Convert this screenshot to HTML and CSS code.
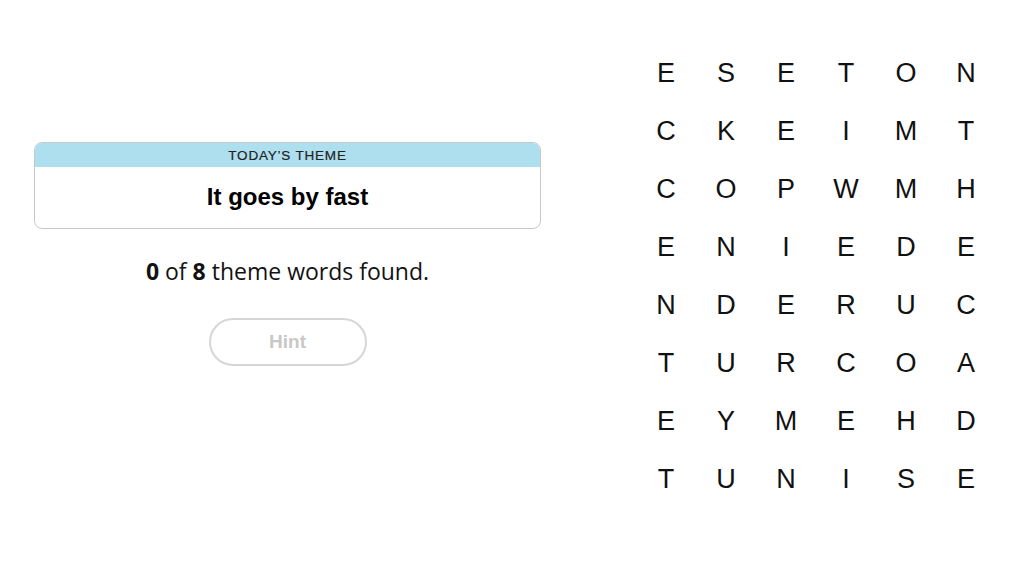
FILE: index.html
```html
<!DOCTYPE html>
<html lang="en">
<head>
    <meta charset="UTF-8">
    <title>Strands</title>
    <link rel="stylesheet" href="styles.css">
</head>
<body>
    <div class="game">
        <div class="side">
            <div class="theme">
                <div class="theme-head">TODAY’S THEME</div>
                <div class="theme-body">It goes by fast</div>
            </div>
            <p class="found"><b>0</b> of <b>8</b> theme words found.</p>
            <button class="hint" type="button" disabled>Hint</button>
        </div>
        <div class="board" id="board"></div>
    </div>
    <script>
        const rows = ["ESETON", "CKEIMT", "COPWMH", "ENIEDE", "NDERUC", "TURCOA", "EYMEHD", "TUNISE"];
        const board = document.getElementById("board");
        rows.forEach(row => {
            for (const ch of row) {
                let cell = document.createElement("div");
                cell.className = "cell";
                cell.innerText = ch;
                board.appendChild(cell);
            }
        });
    </script>
</body>
</html>
```
FILE: styles.css
```css
*{
    box-sizing: border-box;
}

body{
    margin: 0;
    background-color: white;
    font-family: "Liberation Sans", Arial, sans-serif;
    color: #000;
}

.game{
    display: flex;
    align-items: flex-start;
    padding-left: 34px;
}

.side{
    width: 507px;
    padding-top: 142px;
    display: flex;
    flex-direction: column;
    align-items: center;
}

.theme{
    width: 100%;
    border: 1px solid #c8c8c8;
    border-radius: 8px;
    overflow: hidden;
}

.theme-head{
    height: 24px;
    line-height: 25px;
    background-color: #aedfee;
    text-align: center;
    font-size: 13.5px;
    letter-spacing: 0.8px;
    color: #222;
    -webkit-text-stroke: 0.2px #222;
}

.theme-body{
    height: 61px;
    line-height: 60px;
    text-align: center;
    font-size: 24px;
    font-weight: bold;
}

.found{
    margin: 27px 0 0;
    font-size: 23px;
    line-height: 30px;
    color: #121212;
    font-family: "Open Sans", "Liberation Sans", sans-serif;
}

.hint{
    margin-top: 32px;
    width: 158px;
    height: 48px;
    border: 2px solid #d6d6d6;
    border-radius: 24px;
    background: white;
    color: #c8c8c8;
    font-family: "Liberation Sans", Arial, sans-serif;
    font-size: 19px;
    font-weight: bold;
}

.board{
    margin-left: 95px;
    margin-top: 44px;
    display: grid;
    grid-template-columns: repeat(6, 60px);
    grid-auto-rows: 58px;
}

.cell{
    display: flex;
    align-items: center;
    justify-content: center;
    font-size: 27px;
    color: #111;
}
```
